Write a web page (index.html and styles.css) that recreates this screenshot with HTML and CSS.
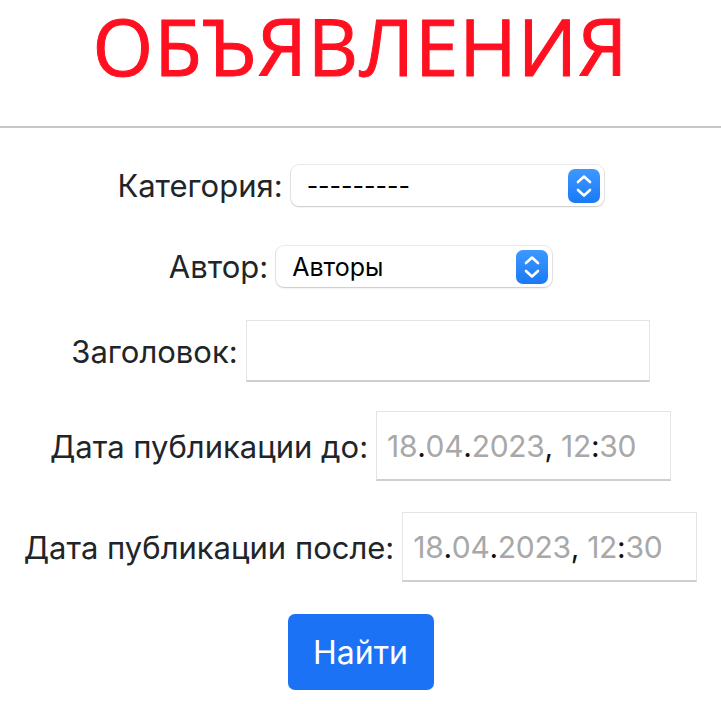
FILE: index.html
```html
<!DOCTYPE html>
<html lang="ru">
<head>
<meta charset="utf-8">
<link rel="stylesheet" href="styles.css">
</head>
<body>
<header class="top">
  <h1 class="title">ОБЪЯВЛЕНИЯ</h1>
</header>
<hr class="rule">
<form class="filter">
  <div class="row">
    <label class="lbl">Категория:</label>
    <div class="select sel1"><span class="val">---------</span><span class="arrow"><svg viewBox="0 0 32 34" width="32" height="34"><path d="M10 13 L16 7.5 L22 13" fill="none" stroke="#fff" stroke-width="2.6" stroke-linecap="round" stroke-linejoin="round"/><path d="M10 21 L16 26.5 L22 21" fill="none" stroke="#fff" stroke-width="2.6" stroke-linecap="round" stroke-linejoin="round"/></svg></span></div>
  </div>
  <div class="row">
    <label class="lbl">Автор:</label>
    <div class="select sel2"><span class="val">Авторы</span><span class="arrow"><svg viewBox="0 0 32 34" width="32" height="34"><path d="M10 13 L16 7.5 L22 13" fill="none" stroke="#fff" stroke-width="2.6" stroke-linecap="round" stroke-linejoin="round"/><path d="M10 21 L16 26.5 L22 21" fill="none" stroke="#fff" stroke-width="2.6" stroke-linecap="round" stroke-linejoin="round"/></svg></span></div>
  </div>
  <div class="row">
    <label class="lbl">Заголовок:</label>
    <div class="textbox"></div>
  </div>
  <div class="row">
    <label class="lbl">Дата публикации до:</label>
    <div class="datebox"><span class="g">18</span>.<span class="g">04</span>.<span class="g">2023</span>, <span class="g">12</span>:<span class="g">30</span></div>
  </div>
  <div class="row">
    <label class="lbl">Дата публикации после:</label>
    <div class="datebox"><span class="g">18</span>.<span class="g">04</span>.<span class="g">2023</span>, <span class="g">12</span>:<span class="g">30</span></div>
  </div>
  <div class="row btnrow">
    <button type="button" class="btn">Найти</button>
  </div>
</form>
</body>
</html>
```
FILE: styles.css
```css
html, body {
  margin: 0;
  padding: 0;
  background: #fff;
}
body {
  font-family: Inter, "Liberation Sans", Arial, sans-serif;
  color: #212529;
  width: 721px;
  height: 704px;
  overflow: hidden;
}
.top {
  display: flex;
  justify-content: center;
  height: 126px;
}
.title {
  margin: 0;
  padding-top: 0;
  font-family: "Open Sans", sans-serif;
  font-weight: 400;
  font-size: 78px;
  line-height: 93px;
  letter-spacing: 1px;
  -webkit-text-stroke: 1px #ff1020;
  color: #ff1020;
}
.rule {
  margin: 0;
  border: 0;
  height: 2px;
  background: #c8c8c8;
}
.filter {
  display: flex;
  flex-direction: column;
  align-items: center;
  padding-top: 37px;
}
.row {
  display: flex;
  align-items: center;
  gap: 8px;
}
.lbl {
  font-size: 31px;
  color: #212529;
}
.select {
  display: flex;
  align-items: center;
  justify-content: space-between;
  height: 41px;
  box-sizing: border-box;
  border-radius: 8px;
  background: #fff;
  box-shadow: 0 0 0 1px rgba(0,0,0,0.08), 0 1px 2px rgba(0,0,0,0.15);
  padding: 0 4px 0 16px;
  font-size: 25px;
  color: #000;
}
.sel1 { width: 313px; }
.sel2 { width: 276px; }
.arrow {
  display: flex;
  width: 32px;
  height: 34px;
  border-radius: 7px;
  background: linear-gradient(#3d98ff, #1a7af5);
}
.row + .row { margin-top: 40px; }
.row:nth-child(3) { margin-top: 33px; }
.row:nth-child(4) { margin-top: 29px; }
.row:nth-child(5) { margin-top: 31px; }
.btnrow { margin-top: 32px !important; }
.textbox {
  width: 404px;
  height: 62px;
  box-sizing: border-box;
  border: 1px solid #e4e4e4;
  border-bottom: 2px solid #cfcfcf;
}
.datebox {
  width: 295px;
  height: 70px;
  box-sizing: border-box;
  border: 1px solid #e4e4e4;
  border-bottom: 2px solid #cfcfcf;
  padding-left: 10px;
  display: flex;
  align-items: center;
  font-size: 30px;
  color: #111;
  white-space: pre;
  letter-spacing: -0.3px;
}
.g { color: #a8a8a8; }
.btn {
  width: 146px;
  height: 76px;
  border: 0;
  border-radius: 7px;
  background: #1b72f5;
  color: #fff;
  font-family: Inter, "Liberation Sans", Arial, sans-serif;
  font-size: 32px;
  padding: 0;
}
```
